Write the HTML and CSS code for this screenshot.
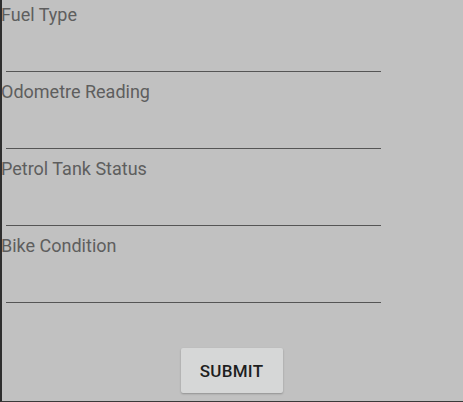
FILE: index.html
```html
<!DOCTYPE html>
<html>
<head>
<meta charset="utf-8">
<link rel="stylesheet" href="styles.css">
</head>
<body>
<div class="screen">
  <form class="form">
    <div class="field">
      <label class="label">Fuel Type</label>
      <div class="input"></div>
    </div>
    <div class="field">
      <label class="label">Odometre Reading</label>
      <div class="input"></div>
    </div>
    <div class="field">
      <label class="label">Petrol Tank Status</label>
      <div class="input"></div>
    </div>
    <div class="field">
      <label class="label">Bike Condition</label>
      <div class="input"></div>
    </div>
    <div class="actions">
      <button type="button" class="submit">SUBMIT</button>
    </div>
  </form>
</div>
</body>
</html>
```
FILE: styles.css
```css
html, body {
  margin: 0;
  padding: 0;
}
body {
  width: 463px;
  height: 402px;
  overflow: hidden;
  font-family: Roboto, "Liberation Sans", sans-serif;
}
.screen {
  box-sizing: border-box;
  width: 463px;
  height: 402px;
  background: #c1c1c1;
  border-left: 2px solid #2e2e2e;
  border-bottom: 1px solid #3a3a3a;
}
.form {
  display: flex;
  flex-direction: column;
}
.field {
  height: 77px;
  display: flex;
  flex-direction: column;
}
.label {
  font-size: 18px;
  line-height: 20px;
  color: #5e5e5e;
  padding-top: 5px;
  margin-left: -1px;
}
.input {
  margin: 46px 82px 0 4px;
  height: 0;
  border-bottom: 1.5px solid #555;
}
.actions {
  display: flex;
  justify-content: center;
  padding-top: 40px;
  padding-right: 2px;
}
.submit {
  width: 102px;
  height: 45px;
  border: none;
  border-radius: 2px;
  background: #d6d7d7;
  color: #1e1e1e;
  font-family: Roboto, "Liberation Sans", sans-serif;
  font-weight: 500;
  font-size: 17px;
  letter-spacing: 0.3px;
  box-shadow: 0 1px 2px rgba(0,0,0,0.25);
  padding: 0;
}
```
